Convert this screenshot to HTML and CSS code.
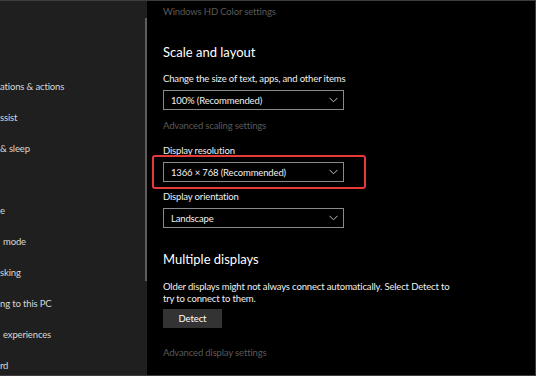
FILE: index.html
```html
<!DOCTYPE html>
<html>
<head>
<meta charset="utf-8">
<link rel="stylesheet" href="styles.css">
</head>
<body>
<div class="frame">
  <nav class="sidebar">
    <div class="scroll-thumb"></div>
    <ul class="nav-list">
      <li></li>
      <li>ations &amp; actions</li>
      <li>ssist</li>
      <li>&amp; sleep</li>
      <li></li>
      <li>e</li>
      <li class="ind">mode</li>
      <li>sking</li>
      <li>ng to this PC</li>
      <li class="ind">experiences</li>
      <li>rd</li>
    </ul>
  </nav>
  <main class="content">
    <div class="link hd">Windows HD Color settings</div>
    <h2 class="heading h-scale">Scale and layout</h2>
    <div class="label l-size">Change the size of text, apps, and other items</div>
    <div class="select s-first"><span>100% (Recommended)</span><svg class="chev" width="9" height="6" viewBox="0 0 9 6"><path d="M0.5 0.8 L4.5 4.8 L8.5 0.8" fill="none" stroke="#bdbdbd" stroke-width="1"/></svg></div>
    <div class="link l-adv">Advanced scaling settings</div>
    <div class="label l-res">Display resolution</div>
    <div class="select s-res"><span>1366 × 768 (Recommended)</span><svg class="chev" width="9" height="6" viewBox="0 0 9 6"><path d="M0.5 0.8 L4.5 4.8 L8.5 0.8" fill="none" stroke="#bdbdbd" stroke-width="1"/></svg><div class="highlight"></div></div>
    <div class="label l-orient">Display orientation</div>
    <div class="select s-orient"><span>Landscape</span><svg class="chev" width="9" height="6" viewBox="0 0 9 6"><path d="M0.5 0.8 L4.5 4.8 L8.5 0.8" fill="none" stroke="#bdbdbd" stroke-width="1"/></svg></div>
    <h2 class="heading h-multi">Multiple displays</h2>
    <p class="para">Older displays might not always connect automatically. Select Detect to<br>try to connect to them.</p>
    <button class="btn">Detect</button>
    <div class="link l-advdisp">Advanced display settings</div>
  </main>
</div>
</body>
</html>
```
FILE: styles.css
```css
html, body {
  margin: 0;
  padding: 0;
  background: #000;
  overflow: hidden;
}
body {
  font-family: "Lato", "Noto Sans", sans-serif;
  color: #fff;
}
.frame {
  width: 535px;
  height: 374px;
  border-top: 1px solid #3d3d3d;
  border-right: 1px solid #3d3d3d;
  border-bottom: 1px solid #3d3d3d;
  display: grid;
  grid-template-columns: 147px 1fr;
  background: #000;
  overflow: hidden;
}
.sidebar {
  background: #1f1f1f;
  position: relative;
}
.scroll-thumb {
  position: absolute;
  left: 145px;
  top: 17px;
  width: 2px;
  height: 263px;
  background: #5e5e5e;
}
.nav-list {
  list-style: none;
  margin: 0;
  padding: 39px 0 0 0;
  font-size: 9.5px;
  letter-spacing: -0.15px;
  color: #d8d8d8;
}
.nav-list li {
  height: 31px;
  line-height: 31px;
  padding-left: 0;
  white-space: nowrap;
}
.nav-list li.ind {
  padding-left: 3px;
}
.content {
  padding-left: 16px;
  display: flex;
  flex-direction: column;
  align-items: flex-start;
  letter-spacing: -0.15px;
}
.link {
  font-size: 9.5px;
  line-height: 14px;
  height: 14px;
  color: #5a5a5a;
}
.hd { margin-top: 4px; }
.heading {
  margin: 0;
  font-weight: normal;
  font-size: 13px;
  letter-spacing: 0;
  line-height: 20px;
  height: 20px;
  color: #fff;
}
.h-scale { margin-top: 23px; }
.label {
  font-size: 9.5px;
  line-height: 14px;
  height: 14px;
  color: #f0f0f0;
}
.l-size { margin-top: 10px; }
.select {
  box-sizing: border-box;
  width: 181px;
  height: 20px;
  border: 1px solid #8a8a8a;
  display: flex;
  align-items: center;
  justify-content: space-between;
  padding: 0 5px 0 7px;
  font-size: 9.5px;
  color: #f0f0f0;
  margin-top: 4px;
  position: relative;
}
.chev { display: block; }
.l-adv { margin-top: 9px; }
.l-res { margin-top: 11px; }
.highlight {
  position: absolute;
  left: -12px;
  top: -8px;
  width: 214px;
  height: 34px;
  box-sizing: border-box;
  border: 2px solid #e53a35;
  border-radius: 3px;
}
.l-orient { margin-top: 8px; }
.h-multi { margin-top: 21px; }
.para {
  margin: 12px 0 0 0;
  font-size: 9.5px;
  line-height: 11.5px;
  color: #f0f0f0;
}
.btn {
  margin-top: 5px;
  width: 59px;
  height: 19px;
  border: none;
  background: #333;
  color: #fff;
  font-family: inherit;
  font-size: 9.5px;
  letter-spacing: -0.1px;
  padding: 0;
}
.l-advdisp { margin-top: 18px; }
```
